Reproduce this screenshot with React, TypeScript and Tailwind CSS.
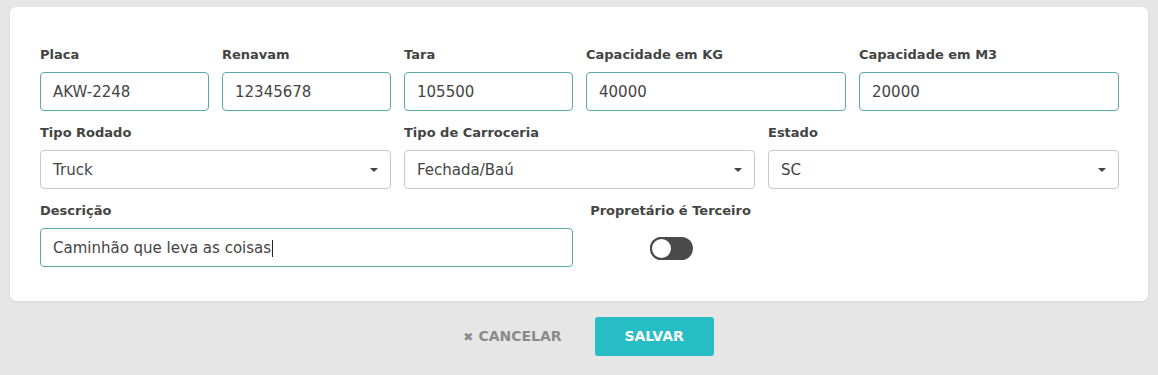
import { useState } from "react";

type FieldProps = {
  label: string;
  value: string;
  span: string;
};

function TextField({ label, value, span }: FieldProps) {
  return (
    <div className={`${span} flex flex-col`}>
      <label className="text-[13px] font-bold text-[#444] leading-[18px] mb-[8px]">{label}</label>
      <input
        defaultValue={value}
        className="h-[39px] w-full rounded-[4px] border border-[#5aaaa9] bg-white px-[12px] pt-[1px] text-[15px] text-[#444] outline-none"
      />
    </div>
  );
}

function SelectField({ label, value, span }: FieldProps) {
  return (
    <div className={`${span} flex flex-col`}>
      <label className="text-[13px] font-bold text-[#444] leading-[18px] mb-[8px]">{label}</label>
      <div className="flex h-[39px] w-full items-center justify-between rounded-[4px] border border-[#c9c9c9] bg-white pl-[12px] pr-[12px] pt-[1px] text-[15px] text-[#444]">
        <span>{value}</span>
        <span className="h-0 w-0 border-x-[4px] border-t-[4px] border-x-transparent border-t-[#444]" />
      </div>
    </div>
  );
}

export default function App() {
  const [terceiro, setTerceiro] = useState(false);

  return (
    <div
      className="min-h-screen bg-[#e6e6e6] pt-[7px]"
      style={{ fontFamily: '"DejaVu Sans", "Open Sans", sans-serif' }}
    >
      {/* Form card */}
      <div className="mx-[10px] rounded-[6px] bg-white pl-[30px] pr-[29px] pt-[39px] pb-[34px] shadow-[0_1px_3px_rgba(0,0,0,0.08)]">
        <div className="grid grid-cols-12 gap-x-[13px] gap-y-[13px]">
          <TextField span="col-span-2" label="Placa" value="AKW-2248" />
          <TextField span="col-span-2" label="Renavam" value="12345678" />
          <TextField span="col-span-2" label="Tara" value="105500" />
          <TextField span="col-span-3" label="Capacidade em KG" value="40000" />
          <TextField span="col-span-3" label="Capacidade em M3" value="20000" />

          <SelectField span="col-span-4" label="Tipo Rodado" value="Truck" />
          <SelectField span="col-span-4" label="Tipo de Carroceria" value="Fechada/Baú" />
          <SelectField span="col-span-4" label="Estado" value="SC" />

          <div className="col-span-6 flex flex-col">
            <label className="text-[13px] font-bold text-[#444] leading-[18px] mb-[8px]">Descrição</label>
            <div className="flex h-[39px] w-full items-center rounded-[4px] border border-[#5aaaa9] bg-white px-[12px] pt-[1px] text-[15px] text-[#444]">
              <span>Caminhão que leva as coisas</span>
              <span className="ml-[1px] h-[17px] w-px bg-[#222]" />
            </div>
          </div>

          <div className="col-span-2 flex flex-col items-center">
            <label className="text-[13px] font-bold text-[#444] leading-[18px] mb-[17px] whitespace-nowrap">
              Propretário é Terceiro
            </label>
            <button
              type="button"
              onClick={() => setTerceiro(!terceiro)}
              className={`ml-[1px] flex h-[23px] w-[43px] items-center rounded-full bg-[#4a4a4a] ${terceiro ? "justify-end" : "justify-start"}`}
            >
              <span className="h-[23px] w-[23px] rounded-full border-[2px] border-[#4a4a4a] bg-white" />
            </button>
          </div>
        </div>
      </div>

      {/* Actions */}
      <div className="flex items-center justify-center gap-[33px] pt-[16px] pl-[19px]">
        <button type="button" className="flex items-center gap-[5px] text-[14px] font-bold text-[#8a8a8a]">
          <span className="text-[12px]">✖</span>
          CANCELAR
        </button>
        <button
          type="button"
          className="h-[39px] w-[119px] rounded-[3px] bg-[#27bdc4] text-[14px] font-bold text-white"
        >
          SALVAR
        </button>
      </div>
    </div>
  );
}
